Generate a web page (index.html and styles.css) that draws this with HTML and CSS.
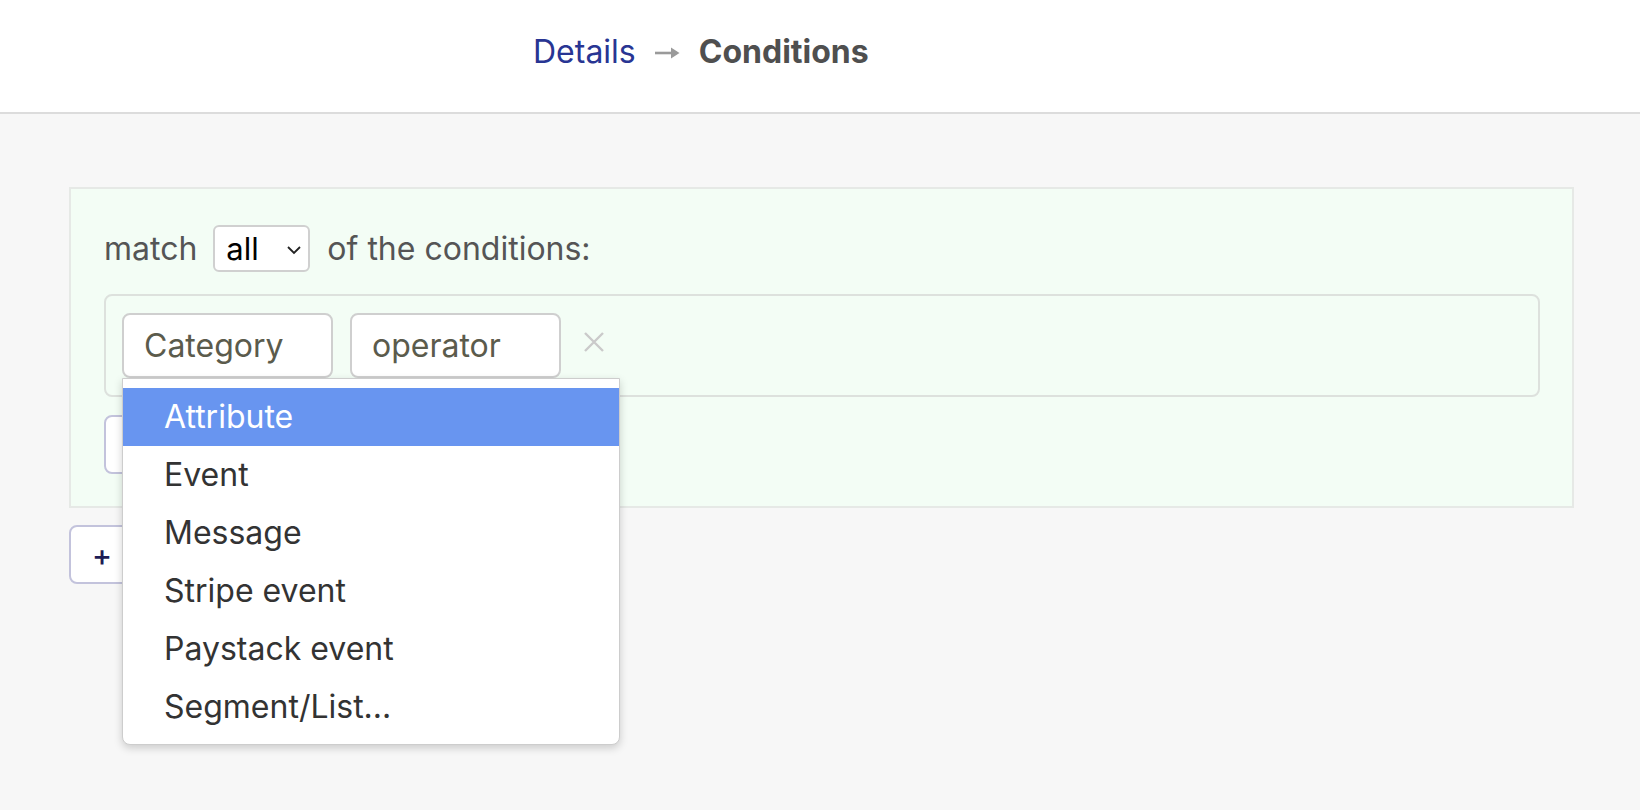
FILE: index.html
```html
<!DOCTYPE html>
<html lang="en">
<head>
<meta charset="utf-8">
<title>Conditions</title>
<link rel="stylesheet" href="styles.css">
</head>
<body>
<header class="topbar">
  <nav class="crumbs">
    <a class="crumb-link" href="#">Details</a>
    <svg class="crumb-arrow" width="26" height="14" viewBox="0 0 26 14"><path d="M1 7 H19" stroke="#9a9a9a" stroke-width="2.6" fill="none"/><path d="M17 1.5 L25.5 7 L17 12.5 Z" fill="#9a9a9a"/></svg>
    <span class="crumb-current">Conditions</span>
  </nav>
</header>
<main class="page">
  <section class="group">
    <div class="match-row">
      <span class="label">match</span>
      <span class="mini-select">all
        <svg class="chev" width="16" height="10" viewBox="0 0 16 10"><path d="M2 2 L8 8 L14 2" fill="none" stroke="#222" stroke-width="1.8"/></svg>
      </span>
      <span class="label">of the conditions:</span>
    </div>
    <div class="condition">
      <div class="field-wrap">
        <div class="field">Category</div>
        <ul class="menu">
          <li class="menu-item active">Attribute</li>
          <li class="menu-item">Event</li>
          <li class="menu-item">Message</li>
          <li class="menu-item">Stripe event</li>
          <li class="menu-item">Paystack event</li>
          <li class="menu-item">Segment/List...</li>
        </ul>
      </div>
      <div class="field">operator</div>
      <svg class="remove" width="22" height="22" viewBox="0 0 22 22"><path d="M2 2 L20 20 M20 2 L2 20" stroke="#cacaca" stroke-width="2.4" fill="none"/></svg>
    </div>
    <button class="btn btn-inner" aria-label="Add condition"></button>
  </section>
  <button class="btn btn-outer" aria-label="Add group">+</button>
</main>
</body>
</html>
```
FILE: styles.css
```css
* { box-sizing: border-box; }
html, body { margin: 0; padding: 0; }
body {
  font-family: Inter, "Noto Sans", sans-serif;
  font-size: 32px;
  background: #f7f7f7;
  color: #555;
  width: 1640px;
  height: 810px;
  overflow: hidden;
}
.topbar {
  background: #fff;
  height: 114px;
  border-bottom: 2px solid #dcdcdc;
  padding: 33px 0 0 533px;
}
.crumbs {
  display: flex;
  align-items: center;
  gap: 18px;
  line-height: 38px;
  font-size: 32px;
}
.crumb-link { color: #283593; text-decoration: none; }
.crumb-arrow { margin: 2px 1px 0 0; }
.crumb-current { color: #4f4f4f; font-weight: 700; }

.page {
  padding: 73px 66px 0 69px;
}
.group {
  background: #f3fdf5;
  border: 2px solid #e6e9e6;
  padding: 36px 32px 32px 33px;
}
.match-row {
  display: flex;
  align-items: center;
  gap: 16px;
  height: 47px;
  color: #555;
}
.label { line-height: 38px; }
.mini-select {
  display: flex;
  align-items: center;
  justify-content: space-between;
  width: 97px;
  height: 47px;
  padding: 0 6px 0 11px;
  background: #fff;
  border: 2px solid #d0d0d0;
  border-radius: 6px;
  color: #000;
  font-size: 31px;
  margin-right: 1px;
}
.chev { margin-top: 2px; }
.condition {
  margin-top: 22px;
  display: flex;
  align-items: center;
  gap: 17px;
  border: 2px solid #dde1dd;
  border-radius: 8px;
  padding: 17px 16px 17px 16px;
}
.field-wrap { position: relative; }
.field {
  width: 211px;
  height: 65px;
  display: flex;
  align-items: center;
  padding-left: 20px;
  background: #fff;
  border: 2px solid #cfcfcf;
  border-radius: 8px;
  color: #5b5b4c;
  line-height: 38px;
}
.remove { margin: 0 0 8px 5px; }
.menu {
  position: absolute;
  top: 100%;
  left: 0;
  width: 498px;
  margin: 0;
  padding: 9px 0 8px;
  list-style: none;
  background: #fff;
  border: 1px solid #cdcdcd;
  border-radius: 0 0 8px 8px;
  box-shadow: 0 3px 8px rgba(0,0,0,0.18);
  z-index: 10;
}
.menu-item {
  height: 58px;
  line-height: 58px;
  padding-left: 41px;
  color: #333;
}
.menu-item.active { background: #6895f0; color: #fff; }
.btn {
  font-family: Inter, "Noto Sans", sans-serif;
  font-size: 30px;
  height: 59px;
  background: #fff;
  color: #1c1c55;
  border: 2px solid #c3c3dc;
  border-radius: 8px;
  display: block;
}
.btn-inner { margin-top: 18px; width: 260px; }
.btn-outer {
  margin-top: 17px;
  width: 240px;
  text-align: left;
  padding: 0 0 0 21px;
  font-weight: 500;
}
```
